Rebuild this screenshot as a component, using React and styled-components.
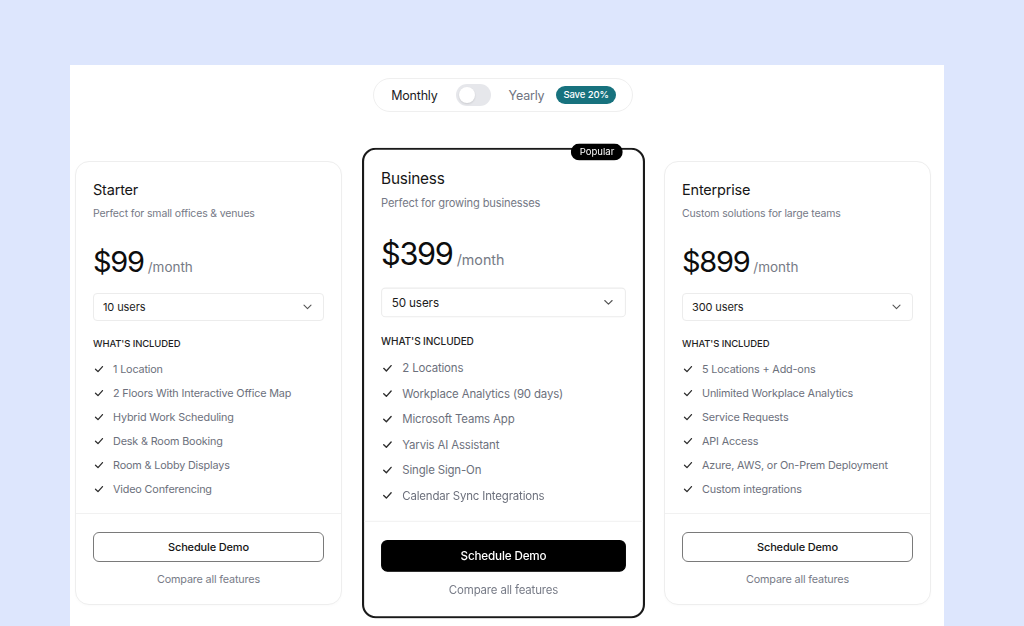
import React from 'react'
import styled, { createGlobalStyle } from 'styled-components'

const GlobalStyle = createGlobalStyle`
  html, body {
    margin: 0;
    padding: 0;
    background: #dde6fd;
    font-family: Inter, "Noto Sans", sans-serif;
    -webkit-font-smoothing: antialiased;
  }
`

const Page = styled.div`
  padding: 65px 80px 0 70px;
  height: 626px;
  box-sizing: border-box;
  overflow: hidden;
`

const Panel = styled.div`
  background: #fff;
  height: 100%;
  padding: 13px 13px 0 5px;
  box-sizing: border-box;
  display: flex;
  flex-direction: column;
  align-items: center;
`

const TogglePill = styled.div`
  display: flex;
  align-items: center;
  height: 34px;
  box-sizing: border-box;
  padding: 0 16px 0 17px;
  border: 1px solid #efefef;
  border-radius: 17px;
  background: #fff;
  font-size: 12.5px;
  letter-spacing: -0.2px;
`

const ToggleLabel = styled.span`
  color: ${p => (p.active ? '#1d1d1f' : '#6f7380')};
  margin-right: ${p => p.gap}px;
`

const Switch = styled.div`
  width: 35px;
  height: 22px;
  border-radius: 11px;
  background: #e6e7eb;
  margin-right: 18px;
  position: relative;

  &::after {
    content: '';
    position: absolute;
    left: 3px;
    top: 3px;
    width: 16px;
    height: 16px;
    border-radius: 50%;
    background: #fff;
    box-shadow: 0 1px 2px rgba(0, 0, 0, 0.12);
  }
`

const SaveBadge = styled.span`
  background: #17727e;
  color: #fff;
  font-size: 9.5px;
  height: 18px;
  line-height: 18px;
  padding: 0 7px;
  border-radius: 9px;
  font-weight: 500;
  letter-spacing: -0.1px;
`

const CardRow = styled.div`
  display: grid;
  grid-template-columns: repeat(3, 267px);
  gap: 27.5px;
  margin-top: 49px;
  align-items: start;
`

const Card = styled.div`
  position: relative;
  background: #fff;
  border: ${p => (p.popular ? '2px solid #1a1a1a' : '1px solid #eeeeee')};
  border-radius: ${p => (p.popular ? '13px' : '14px')};
  box-sizing: border-box;
  height: 444px;
  display: flex;
  flex-direction: column;
  transform: ${p => (p.popular ? 'scale(1.06)' : 'none')};
  box-shadow: ${p => (p.popular ? 'none' : '0 1px 3px rgba(0,0,0,0.02)')};
`

const PopularBadge = styled.span`
  position: absolute;
  top: -6px;
  right: 19px;
  height: 16px;
  line-height: 16px;
  padding: 0 8px;
  border-radius: 8px;
  background: #000;
  color: #fff;
  font-size: 9px;
`

const CardBody = styled.div`
  padding: ${p => (p.popular ? '17px 16px 0' : '18px 17px 0')};
  flex: 1;
  display: flex;
  flex-direction: column;
`

const PlanName = styled.div`
  font-size: 14.5px;
  line-height: 20px;
  color: #161616;
  letter-spacing: -0.2px;
`

const PlanDesc = styled.div`
  margin-top: 6px;
  font-size: 10.5px;
  line-height: 16px;
  color: #757986;
  letter-spacing: -0.15px;
`

const PriceRow = styled.div`
  margin-top: 22px;
  display: flex;
  align-items: baseline;
  gap: 4px;
  height: 36px;
`

const Price = styled.span`
  font-size: 29px;
  color: #0d0d0d;
  letter-spacing: -1.3px;
`

const Per = styled.span`
  font-size: 13.5px;
  color: #767a85;
`

const Select = styled.div`
  margin-top: 13px;
  height: 28px;
  box-sizing: border-box;
  border: 1px solid #ececec;
  border-radius: 4px;
  display: flex;
  align-items: center;
  justify-content: space-between;
  padding: 0 11px 0 9px;
  font-size: 11px;
  color: #1c1c1c;
  letter-spacing: -0.1px;
`

const SectionLabel = styled.div`
  margin-top: 16px;
  font-size: 9.5px;
  line-height: 14px;
  font-weight: 500;
  color: #1f1f1f;
  letter-spacing: -0.1px;
`

const List = styled.ul`
  list-style: none;
  margin: 6px 0 0;
  padding: 0;
`

const Item = styled.li`
  display: flex;
  align-items: center;
  gap: 8px;
  height: 24px;
  font-size: 10.8px;
  color: #6c707c;
  letter-spacing: -0.15px;

  svg {
    flex: none;
  }
`

const Footer = styled.div`
  border-top: 1px solid #f1f1f1;
  padding: ${p => (p.popular ? '17px 16px 16px' : '18px 17px 16px')};
  display: flex;
  flex-direction: column;
  align-items: stretch;
`

const DemoButton = styled.button`
  height: 30px;
  border-radius: 6px;
  font-family: inherit;
  font-size: 11px;
  font-weight: 500;
  letter-spacing: -0.15px;
  cursor: pointer;
  border: 1px solid ${p => (p.primary ? '#000' : '#7a7a7a')};
  background: ${p => (p.primary ? '#000' : '#fff')};
  color: ${p => (p.primary ? '#fff' : '#151515')};
`

const CompareLink = styled.a`
  margin-top: 10px;
  text-align: center;
  font-size: 10.8px;
  line-height: 16px;
  color: #777b87;
  text-decoration: none;
  letter-spacing: -0.15px;
`

const Check = () => (
  <svg width="12" height="10" viewBox="0 0 12 10">
    <polyline points="2.5,5.2 5,7.6 9.5,2.6" fill="none" stroke="#2e2e2e" strokeWidth="1.3" strokeLinecap="round" strokeLinejoin="round" />
  </svg>
)

const Chevron = () => (
  <svg width="9" height="6" viewBox="0 0 9 6">
    <polyline points="1,1.2 4.5,4.6 8,1.2" fill="none" stroke="#555" strokeWidth="1.1" strokeLinecap="round" strokeLinejoin="round" />
  </svg>
)

const plans = [
  {
    name: 'Starter',
    desc: 'Perfect for small offices & venues',
    price: '$99',
    users: '10 users',
    features: [
      '1 Location',
      '2 Floors With Interactive Office Map',
      'Hybrid Work Scheduling',
      'Desk & Room Booking',
      'Room & Lobby Displays',
      'Video Conferencing',
    ],
  },
  {
    name: 'Business',
    desc: 'Perfect for growing businesses',
    price: '$399',
    users: '50 users',
    popular: true,
    features: [
      '2 Locations',
      'Workplace Analytics (90 days)',
      'Microsoft Teams App',
      'Yarvis AI Assistant',
      'Single Sign-On',
      'Calendar Sync Integrations',
    ],
  },
  {
    name: 'Enterprise',
    desc: 'Custom solutions for large teams',
    price: '$899',
    users: '300 users',
    features: [
      '5 Locations + Add-ons',
      'Unlimited Workplace Analytics',
      'Service Requests',
      'API Access',
      'Azure, AWS, or On-Prem Deployment',
      'Custom integrations',
    ],
  },
]

const PlanCard = ({ plan }) => (
  <Card popular={plan.popular}>
    {plan.popular && <PopularBadge>Popular</PopularBadge>}
    <CardBody popular={plan.popular}>
      <PlanName>{plan.name}</PlanName>
      <PlanDesc>{plan.desc}</PlanDesc>
      <PriceRow>
        <Price>{plan.price}</Price>
        <Per>/month</Per>
      </PriceRow>
      <Select>
        <span>{plan.users}</span>
        <Chevron />
      </Select>
      <SectionLabel>WHAT'S INCLUDED</SectionLabel>
      <List>
        {plan.features.map(f => (
          <Item key={f}>
            <Check />
            {f}
          </Item>
        ))}
      </List>
    </CardBody>
    <Footer popular={plan.popular}>
      <DemoButton primary={plan.popular}>Schedule Demo</DemoButton>
      <CompareLink href="#">Compare all features</CompareLink>
    </Footer>
  </Card>
)

const App = () => (
  <>
    <GlobalStyle />
    <Page>
      <Panel>
        <TogglePill>
          <ToggleLabel active gap={18}>Monthly</ToggleLabel>
          <Switch />
          <ToggleLabel gap={12}>Yearly</ToggleLabel>
          <SaveBadge>Save 20%</SaveBadge>
        </TogglePill>
        <CardRow>
          {plans.map(p => (
            <PlanCard key={p.name} plan={p} />
          ))}
        </CardRow>
      </Panel>
    </Page>
  </>
)

export default App
